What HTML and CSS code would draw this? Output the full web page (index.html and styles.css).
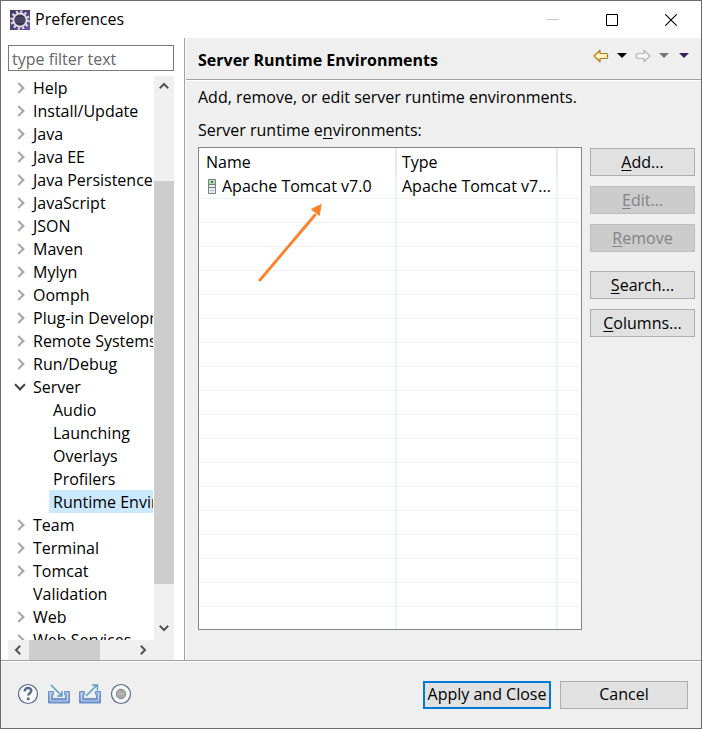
FILE: index.html
```html
<!DOCTYPE html>
<html lang="en">
<head>
<meta charset="utf-8">
<meta name="viewport" content="width=device-width, initial-scale=1">
<title>Preferences</title>
<link rel="stylesheet" href="styles.css">
</head>
<body>
<div class="window">
  <header class="titlebar">
    <svg class="app-icon" width="20" height="20" viewBox="0 0 20 20" aria-hidden="true">
      <defs><linearGradient id="app" x1="0" y1="0" x2="1" y2="1"><stop offset="0" stop-color="#463a62"/><stop offset="0.5" stop-color="#51407a"/><stop offset="1" stop-color="#7650a8"/></linearGradient></defs>
      <rect width="20" height="20" fill="url(#app)"/>
      <circle cx="10" cy="10" r="8.500" fill="none" stroke="#d9d7de" stroke-width="2.500" stroke-dasharray="2.225 2.225"/>
      <circle cx="10" cy="10" r="6.600" fill="#38344f" stroke="#dedce2" stroke-width="2"/>
      <path d="M5 8h10M4.500 10h11M5 12h10" stroke="#59567a"/>
    </svg>
    <h1 class="title">Preferences</h1>
    <div class="window-controls">
      <button class="wc" type="button" aria-label="Minimize" disabled><svg width="12" height="12" viewBox="0 0 12 12"><path d="M0 5.500h12" stroke="#c4c4c4"/></svg></button>
      <button class="wc" type="button" aria-label="Maximize"><svg width="12" height="12" viewBox="0 0 12 12"><path d="M.5.500h11v11H.5z" fill="none" stroke="#000"/></svg></button>
      <button class="wc" type="button" aria-label="Close"><svg width="12" height="12" viewBox="0 0 12 12"><path d="M.3.300l11.400 11.400M11.700.300L.3 11.700" stroke="#000" stroke-width="1.100"/></svg></button>
    </div>
  </header>

  <div class="main">
    <nav class="sidebar" aria-label="Preference pages">
      <input class="filter" type="text" placeholder="type filter text" aria-label="Filter">
      <div class="tree-box">
        <ul class="tree">
          <li class="node closed">Help</li>
          <li class="node closed">Install/Update</li>
          <li class="node closed">Java</li>
          <li class="node closed">Java EE</li>
          <li class="node closed">Java Persistence</li>
          <li class="node closed">JavaScript</li>
          <li class="node closed">JSON</li>
          <li class="node closed">Maven</li>
          <li class="node closed">Mylyn</li>
          <li class="node closed">Oomph</li>
          <li class="node closed">Plug-in Development</li>
          <li class="node closed">Remote Systems</li>
          <li class="node closed">Run/Debug</li>
          <li class="node open">Server</li>
          <li class="node child">Audio</li>
          <li class="node child">Launching</li>
          <li class="node child">Overlays</li>
          <li class="node child">Profilers</li>
          <li class="node child"><span class="selected">Runtime Environments</span></li>
          <li class="node closed">Team</li>
          <li class="node closed">Terminal</li>
          <li class="node closed">Tomcat</li>
          <li class="node">Validation</li>
          <li class="node closed">Web</li>
          <li class="node closed">Web Services</li>
        </ul>
        <div class="vscroll">
          <button class="sb" type="button" aria-label="Scroll up"><svg width="10" height="8" viewBox="0 0 10 8"><path d="M.8 6.200L5 2l4.200 4.200" fill="none" stroke="#555" stroke-width="2"/></svg></button>
          <div class="vtrack"><div class="vthumb"></div></div>
          <button class="sb" type="button" aria-label="Scroll down"><svg width="10" height="8" viewBox="0 0 10 8"><path d="M.8 1.800L5 6l4.200-4.200" fill="none" stroke="#555" stroke-width="2"/></svg></button>
        </div>
        <div class="hscroll">
          <button class="sb" type="button" aria-label="Scroll left"><svg width="8" height="10" viewBox="0 0 8 10"><path d="M6.200.800L2 5l4.200 4.200" fill="none" stroke="#555" stroke-width="2"/></svg></button>
          <div class="htrack"><div class="hthumb"></div></div>
          <button class="sb" type="button" aria-label="Scroll right"><svg width="8" height="10" viewBox="0 0 8 10"><path d="M1.800.800L6 5 1.800 9.200" fill="none" stroke="#555" stroke-width="2"/></svg></button>
        </div>
      </div>
    </nav>

    <main class="page">
      <div class="page-head">
        <h2 class="page-title">Server Runtime Environments</h2>
        <div class="history">
          <button class="tool" type="button" aria-label="Back"><svg width="16" height="14" viewBox="0 0 16 14"><path d="M1 7L7 1.200V4.500h6.500q1 0 1 1v3q0 1-1 1H7v3.300z" fill="#fff3c4" stroke="#b97a14" stroke-width="1.200" stroke-linejoin="round"/></svg></button>
          <button class="tool" type="button" aria-label="Back history"><svg width="10" height="6" viewBox="0 0 10 6"><path d="M0 0h10L5 5z" fill="#000"/></svg></button>
          <button class="tool" type="button" aria-label="Forward" disabled><svg width="16" height="14" viewBox="0 0 16 14"><path d="M15 7L9 1.200V4.500H2.500q-1 0-1 1v3q0 1 1 1H9v3.300z" fill="#f4f4f4" stroke="#b4b4b4" stroke-width="1.200" stroke-linejoin="round"/></svg></button>
          <button class="tool" type="button" aria-label="Forward history" disabled><svg width="10" height="6" viewBox="0 0 10 6"><path d="M0 0h10L5 5z" fill="#77777b"/></svg></button>
          <button class="tool view-menu" type="button" aria-label="View menu"><svg width="10" height="6" viewBox="0 0 10 6"><path d="M0 0h10L5 5z" fill="#35205c"/></svg></button>
        </div>
      </div>
      <div class="page-body">
        <p class="intro">Add, remove, or edit server runtime environments.</p>
        <p class="label">Server runtime e<u>n</u>vironments:</p>
        <div class="columns">
          <div class="grid-box">
            <table class="grid">
              <colgroup><col class="col-name"><col class="col-type"><col></colgroup>
              <thead><tr><th scope="col">Name</th><th scope="col">Type</th><td></td></tr></thead>
              <tbody>
                <tr class="item">
                  <td><div class="runtime"><svg width="8" height="15" viewBox="0 0 8 15" aria-hidden="true"><path d="M.5.500h7v14h-7z" fill="#e4ecf4" stroke="#79817b"/><path d="M1 1h6v4H1z" fill="#b8d8b4"/><path d="M3 2h2v2H3z" fill="#16983c"/><path d="M1 5.500h6M1 8.500h6" stroke="#79817b"/><path d="M2 11.500h4" stroke="#a8b8d4"/></svg>Apache Tomcat v7.0</div></td>
                  <td>Apache Tomcat v7...</td><td></td>
                </tr>
                <tr class="empty"><td></td><td></td><td></td></tr>
              </tbody>
            </table>
            <svg class="pointer" width="66" height="80" viewBox="0 0 66 80" aria-hidden="true"><path d="M2 77L57 12" stroke="#ff8026" stroke-width="2.800" stroke-linecap="round"/><path d="M63.500 1L61.500 12.500 57.500 9.500 53 6z" fill="#ff8026"/><path d="M63.500 1L53 6.500 56.500 9 60 12 61.500 13z" fill="#ff8026"/></svg>
          </div>
          <div class="actions">
            <button class="btn" type="button"><u>A</u>dd...</button>
            <button class="btn" type="button" disabled><u>E</u>dit...</button>
            <button class="btn" type="button" disabled><u>R</u>emove</button>
            <button class="btn second-group" type="button"><u>S</u>earch...</button>
            <button class="btn" type="button"><u>C</u>olumns...</button>
          </div>
        </div>
      </div>
    </main>
  </div>

  <footer class="footer">
    <svg width="0" height="0" class="defs" aria-hidden="true"><defs><linearGradient id="tray" x1="0" y1="0" x2="0" y2="1"><stop offset="0" stop-color="#a9c1e2"/><stop offset="1" stop-color="#6389c4"/></linearGradient></defs></svg>
    <div class="foot-tools">
      <button class="tool" type="button" aria-label="Help"><svg width="22" height="22" viewBox="0 0 22 22"><circle cx="11" cy="11" r="9.500" fill="#f8f8f9" stroke="#596a8e" stroke-width="1.200"/><path d="M7.700 8.500C7.500 3.800 14.600 4 14.300 7.900c-.2 2.100-3 2.300-3 4.700" fill="none" stroke="#596a8e" stroke-width="2.400"/><circle cx="11.200" cy="15.800" r="1.500" fill="#596a8e"/></svg></button>
      <button class="tool" type="button" aria-label="Import"><svg width="22" height="22" viewBox="0 0 22 22"><path d="M.5 8.500h5v3h-1v4h13v-4h-1v-3h5v11.500H.5z" fill="url(#tray)" stroke="#6f91c5"/><path d="M2.500 10v8h17v-8" fill="none" stroke="#c3d4eb"/><path d="M3 2l10 10M14 8v5H9" fill="none" stroke="#5a9cc6" stroke-width="1.500"/></svg></button>
      <button class="tool" type="button" aria-label="Export"><svg width="22" height="22" viewBox="0 0 22 22"><path d="M.5 8.500h5v3h-1v4h13v-4h-1v-3h5v11.500H.5z" fill="url(#tray)" stroke="#6f91c5"/><path d="M2.500 10v8h17v-8" fill="none" stroke="#c3d4eb"/><path d="M7 13L18 2M13 2h5.500v5.500" fill="none" stroke="#5a9cc6" stroke-width="1.500"/></svg></button>
      <button class="tool" type="button" aria-label="Record"><svg width="22" height="22" viewBox="0 0 22 22"><circle cx="11" cy="11" r="9.500" fill="#f8f8f8" stroke="#596a8e" stroke-width="1.200"/><circle cx="11" cy="11" r="4.700" fill="#a9a9a9" stroke="#858585"/><path d="M7 11h8" stroke="#c2c2c2"/></svg></button>
    </div>
    <div class="foot-buttons">
      <button class="btn primary" type="submit">Apply and Close</button>
      <button class="btn" type="button">Cancel</button>
    </div>
  </footer>
</div>
</body>
</html>
```
FILE: styles.css
```css
*, *::before { box-sizing: border-box; }
body {
  margin: 0;
  font: 16px/25px "Open Sans", "Noto Sans", sans-serif;
  color: #000;
}
button, input { font: inherit; color: inherit; }
h1, h2, p, ul { margin: 0; padding: 0; font-weight: 400; font-size: 16px; }
svg { display: block; flex: none; }
.window {
  display: flex;
  flex-direction: column;
  height: 100vh;
  min-height: 480px;
  border: 1px solid #6b6b6b;
  background: #efefef;
}
.titlebar {
  display: flex;
  align-items: center;
  height: 37px;
  flex: none;
  background: #fff;
  padding: 0 1px 0 9px;
}
.title { margin-left: 5px; flex: 1; }
.window-controls { display: flex; }
.wc {
  display: grid;
  place-items: center;
  width: 59px;
  height: 37px;
  padding: 0;
  border: 0;
  background: none;
}
.main { display: flex; flex: 1; min-height: 0; }
.sidebar {
  display: flex;
  flex-direction: column;
  gap: 5px;
  width: 184px;
  flex: none;
  padding: 7px 10px 0 7px;
  background: #fff;
  border-right: 1px solid #a0a0a0;
}
.filter {
  width: 100%;
  height: 26px;
  padding: 1px 3px 0;
  border: 1px solid #7a7a7a;
  border-radius: 0;
  background: #fff;
}
.filter::placeholder { color: #666; opacity: 1; }
.tree-box {
  display: grid;
  grid-template-columns: minmax(0, 1fr) 20px;
  grid-template-rows: minmax(0, 1fr) 20px;
  flex: 1;
  min-height: 0;
}
.tree { list-style: none; overflow: hidden; margin-right: 1px; }
.node {
  position: relative;
  height: 23px;
  padding-left: 25px;
  white-space: nowrap;
  overflow: hidden;
}
.child { padding-left: 41px; text-indent: 4px; }
.selected { display: block; background: #cce8ff; }
.closed::before, .open::before {
  content: "";
  position: absolute;
  width: 8px;
  height: 8px;
  border: solid #a6a6a6;
  border-width: 2px 2px 0 0;
  left: 7px;
  top: 8px;
  transform: rotate(45deg);
}
.open::before {
  border-color: #404040;
  left: 8px;
  top: 6px;
  transform: rotate(135deg);
}
.vscroll {
  grid-column: 2;
  grid-row: 1 / 3;
  display: flex;
  flex-direction: column;
  padding-bottom: 22px;
  background: #f0f0f0;
}
.hscroll { display: flex; grid-row: 2; grid-column: 1; padding-right: 1px; background: #f0f0f0; }
.sb {
  display: grid;
  place-items: center;
  flex: none;
  width: 20px;
  height: 20px;
  padding: 0;
  border: 0;
  background: none;
}
.vtrack { flex: 1; display: flex; flex-direction: column; justify-content: flex-end; padding-bottom: 34px; }
.vthumb { height: 403px; flex-shrink: 1; background: #cdcdcd; }
.htrack { flex: 1; padding-left: 1px; }
.hthumb { width: 68%; height: 100%; background: #cdcdcd; }
.page {
  display: flex;
  flex-direction: column;
  flex: 1;
  min-width: 0;
  border-left: 1px solid #fff;
}
.page-head {
  display: flex;
  align-items: center;
  justify-content: space-between;
  height: 42px;
  flex: none;
  padding: 4px 12px 0;
  border-bottom: 1px solid #a0a0a0;
}
.page-title { font-weight: 700; }
.history { display: flex; align-items: center; gap: 8px; padding-bottom: 10px; }
.view-menu { margin-left: 2px; }
.tool { display: block; padding: 0; border: 0; background: none; }
.page-body {
  display: flex;
  flex-direction: column;
  flex: 1;
  min-height: 0;
  padding: 4px 6px 30px 12px;
  border-top: 1px solid #fff;
}
.label { margin: 8px 0 4px; }
.columns { display: flex; gap: 8px; flex: 1; min-height: 0; }
.grid-box {
  position: relative;
  flex: 1;
  min-width: 0;
  border: 1px solid #828790;
  background: #fff;
}
.grid { width: 100%; height: 100%; table-layout: fixed; border-collapse: separate; border-spacing: 0; }
.col-name { width: 198px; }
.col-type { width: 161px; }
.grid th, .grid td {
  padding: 0 0 0 5px;
  line-height: 23px;
  text-align: left;
  font-weight: 400;
  white-space: nowrap;
  vertical-align: middle;
  border-right: 2px solid #edf3fb;
}
.grid th { height: 27px; padding-top: 2px; border-right: 2px solid #e8e8e8; }
.grid th:first-child { padding-left: 7px; }
.grid td:last-child { border-right: 0; padding: 0; }
.item td { height: 24px; border-bottom: 1px solid #f0f0f0; }
.runtime { display: flex; align-items: center; gap: 6px; padding-left: 4px; }
.empty td {
  height: 100%;
  background: repeating-linear-gradient(#fff 0 23px, #f0f0f0 23px 24px);
}
.pointer { position: absolute; left: 59px; top: 55px; }
.actions { display: flex; flex-direction: column; gap: 10px; width: 105px; padding-top: 1px; }
.btn {
  height: 28px;
  flex: none;
  padding: 0;
  line-height: 23px;
  border: 1px solid #adadad;
  border-radius: 0;
  background: #e1e1e1;
}
.btn:disabled { background: #ccc; border-color: #bfbfbf; color: #838383; }
.second-group { margin-top: 9px; }
.primary { border: 2px solid #0078d7; }
u { text-underline-offset: 2px; }
.footer {
  display: flex;
  align-items: center;
  justify-content: space-between;
  height: 68px;
  flex: none;
  padding: 0 13px 0 16px;
  border-top: 1px solid #a0a0a0;
  box-shadow: inset 0 1px #fff;
}
.defs { position: absolute; }
.foot-tools { display: flex; gap: 9px; padding-bottom: 2px; }
.foot-buttons { display: flex; gap: 9px; }
.foot-buttons .btn { width: 128px; }
```
